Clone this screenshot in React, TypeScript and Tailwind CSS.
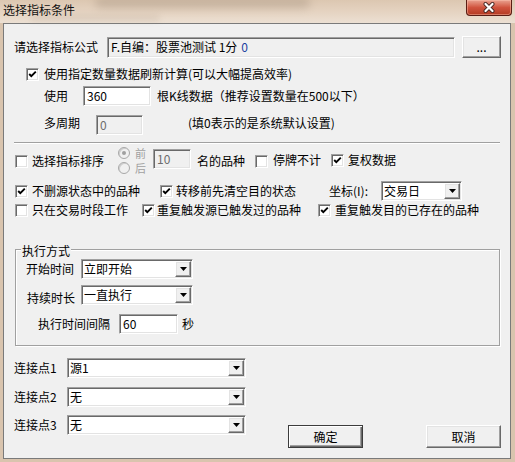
import React from "react";

const sunken =
  "border border-t-[#a0a0a0] border-l-[#a0a0a0] border-r-white border-b-white shadow-[inset_1px_1px_0_#696969,inset_-1px_-1px_0_#e3e3e3]";
const raised =
  "border border-t-white border-l-white border-r-[#696969] border-b-[#696969] shadow-[inset_-1px_-1px_0_#a0a0a0,inset_1px_1px_0_#e3e3e3] bg-[#f0f0f0]";

function Check({ checked, className = "" }: { checked?: boolean; className?: string }) {
  return (
    <span className={`relative inline-block w-[13px] h-[13px] shrink-0 bg-white ${sunken} ${className}`}>
      {checked && (
        <svg className="absolute left-0 top-0" width="11" height="11" viewBox="0 0 11 11">
          <path d="M2.2 5 L4.3 7.2 L8.8 2.6" fill="none" stroke="#000" strokeWidth="1.9" />
        </svg>
      )}
    </span>
  );
}

function Radio({ checked }: { checked?: boolean }) {
  return (
    <span className="relative inline-flex items-center justify-center w-[12px] h-[12px] shrink-0 rounded-full border border-[#a8a8a8] bg-[#f0f0f0] shadow-[inset_1px_1px_0_#cfcfcf]">
      {checked && <span className="w-[4px] h-[4px] rounded-full bg-[#a0a0a0]" />}
    </span>
  );
}

function Edit({ value, disabled, className = "" }: { value: string; disabled?: boolean; className?: string }) {
  return (
    <div
      className={`flex items-center pl-[3px] shrink-0 ${sunken} ${
        disabled ? "bg-[#f0f0f0] text-[#6d6d6d]" : "bg-white text-black"
      } ${className}`}
    >
      <span className="leading-[14px]">{value}</span>
    </div>
  );
}

function Arrow() {
  return (
    <span className={`flex items-center justify-center w-[16px] h-[16px] mr-[1px] shrink-0 ${raised}`}>
      <svg width="7" height="4" viewBox="0 0 7 4">
        <path d="M0 0 H7 L3.5 4 Z" fill="#000" />
      </svg>
    </span>
  );
}

function Select({ value, className = "" }: { value: string; className?: string }) {
  return (
    <div className={`flex items-center bg-white shrink-0 ${sunken} ${className}`}>
      <span className="flex-1 pl-[2px] leading-[14px]">{value}</span>
      <Arrow />
    </div>
  );
}

export default function App() {
  return (
    <div className="w-[515px] h-[462px] overflow-hidden bg-[#d9c4ae] font-['Noto_Sans_CJK_SC','Noto_Sans',sans-serif] text-[12px] leading-[14px] text-black flex flex-col">
      {/* title bar */}
      <div className="relative h-[23px] shrink-0 flex items-start bg-linear-to-b from-[#dcc7b1] via-[#e5d3c1] to-[#ece0d3]">
        <div className="absolute left-[95px] top-[-3px] w-[215px] h-[11px] rounded-full bg-[#8c7a68] opacity-30 blur-[4px]" />
        <div className="absolute left-[30px] top-[15px] w-[130px] h-[6px] rounded-full bg-[#a08c78] opacity-20 blur-[3px]" />
        <span className="relative pl-[3px] pt-[3px] text-[12px] leading-[14px] text-[#111]">选择指标条件</span>
        <div className="relative ml-auto mr-[3px] w-[46px] h-[16px] rounded-b-[4px] border border-t-0 border-[#5a1d14] bg-linear-to-b from-[#e9a190] via-[#d0533e] to-[#b33a22] flex items-center justify-center shadow-[inset_0_0_0_1px_rgba(255,200,180,0.45)]">
          <svg width="14" height="11" viewBox="0 0 14 11">
            <path d="M3.5 2 L10.5 9 M10.5 2 L3.5 9" stroke="#4a2a26" strokeWidth="4" strokeLinecap="round" />
            <path d="M3.5 2 L10.5 9 M10.5 2 L3.5 9" stroke="#fff" strokeWidth="2.2" strokeLinecap="round" />
          </svg>
        </div>
      </div>

      {/* client area */}
      <div className="ml-[3px] w-[508px] h-[436px] shrink-0 border border-[#7a7a7a] bg-[#f0f0f0] pl-[10px] flex flex-col">
        {/* formula row */}
        <div className="mt-[12px] h-[22px] flex items-center">
          <span>请选择指标公式</span>
          <div className={`ml-[9px] w-[348px] h-[21px] flex items-center pl-[3px] bg-[#f0f0f0] ${sunken}`}>
            <span>F.自编：股票池测试 1分 </span>
            <span className="ml-[4px] text-[#1a3fa0]">0</span>
          </div>
          <button className={`ml-[7px] w-[39px] h-[22px] flex items-center justify-center leading-[14px] ${raised}`}>
            ...
          </button>
        </div>

        {/* use count checkbox */}
        <div className="mt-[9px] h-[14px] flex items-center">
          <Check checked className="ml-[12px]" />
          <span className="ml-[5px]">使用指定数量数据刷新计算(可以大幅提高效率)</span>
        </div>

        <div className="mt-[5px] h-[20px] flex items-center">
          <span className="ml-[30px]">使用</span>
          <Edit value="360" className="ml-[15px] w-[68px] h-[20px]" />
          <span className="ml-[6px]">根K线数据（推荐设置数量在500以下）</span>
        </div>

        <div className="mt-[9px] h-[20px] flex items-start">
          <span className="ml-[30px] mt-[1px]">多周期</span>
          <Edit value="0" disabled className="ml-[16px] w-[47px] h-[20px]" />
          <span className="ml-[45px] mt-[1px]">(填0表示的是系统默认设置)</span>
        </div>

        <div className="mt-[7px] w-[486px] h-[2px] border-t border-t-[#a0a0a0] border-b border-b-white" />

        {/* sort row */}
        <div className="mt-[2px] h-[28px] flex items-start">
          <Check className="ml-[1px] mt-[9px]" />
          <span className="ml-[4px] mt-[8px]">选择指标排序</span>
          <div className="ml-[14px] flex flex-col">
            <div className="h-[14px] flex items-center">
              <Radio checked />
              <span className="ml-[5px] text-[11px] leading-[12px] text-[#a0a0a0]">前</span>
            </div>
            <div className="mt-[1px] h-[14px] flex items-center">
              <Radio />
              <span className="ml-[5px] text-[11px] leading-[12px] text-[#a0a0a0]">后</span>
            </div>
          </div>
          <Edit value="10" disabled className="ml-[7px] mt-[3px] w-[38px] h-[20px]" />
          <span className="ml-[6px] mt-[8px]">名的品种</span>
          <Check className="ml-[10px] mt-[9px]" />
          <span className="ml-[5px] mt-[7px]">停牌不计</span>
          <Check checked className="ml-[10px] mt-[8px]" />
          <span className="ml-[4px] mt-[7px]">复权数据</span>
        </div>

        <div className="mt-[7px] h-[20px] flex items-center">
          <Check checked className="ml-[1px]" />
          <span className="ml-[4px]">不删源状态中的品种</span>
          <Check checked className="ml-[20px]" />
          <span className="ml-[3px]">转移前先清空目的状态</span>
          <span className="ml-[33px] w-[52px]">坐标(I):</span>
          <Select value="交易日" className="w-[81px] h-[20px]" />
        </div>

        <div className="mt-[2px] h-[14px] flex items-center">
          <Check className="ml-[1px]" />
          <span className="ml-[4px]">只在交易时段工作</span>
          <Check checked className="ml-[14px]" />
          <span className="ml-[2px]">重复触发源已触发过的品种</span>
          <Check checked className="ml-[17px]" />
          <span className="ml-[4px]">重复触发目的已存在的品种</span>
        </div>

        {/* group box */}
        <div className="relative mt-[32px] ml-[1px] w-[485px] h-[97px] shrink-0 border border-[#a0a0a0] shadow-[inset_1px_1px_0_#fff,1px_1px_0_#fff] pl-[10px] flex flex-col">
          <span className="absolute left-[5px] top-[-6px] px-[1px] bg-[#f0f0f0]">执行方式</span>
          <div className="mt-[9px] h-[20px] flex items-center">
            <span>开始时间</span>
            <Select value="立即开始" className="ml-[7px] w-[112px] h-[20px]" />
          </div>
          <div className="mt-[6px] h-[20px] flex items-start">
            <span className="ml-[1px] mt-[6px]">持续时长</span>
            <Select value="一直执行" className="ml-[6px] w-[112px] h-[20px]" />
          </div>
          <div className="mt-[9px] h-[20px] flex items-center">
            <span className="ml-[12px]">执行时间间隔</span>
            <Edit value="60" className="ml-[9px] w-[59px] h-[20px]" />
            <span className="ml-[4px]">秒</span>
          </div>
        </div>

        {/* connection points + buttons */}
        <div className="mt-[12px] flex items-start">
          <div className="flex flex-col">
            <div className="h-[20px] flex items-center">
              <span className="w-[53px]">连接点1</span>
              <Select value="源1" className="w-[179px] h-[20px]" />
            </div>
            <div className="mt-[9px] h-[20px] flex items-center">
              <span className="w-[53px]">连接点2</span>
              <Select value="无" className="w-[179px] h-[20px]" />
            </div>
            <div className="mt-[8px] h-[20px] flex items-center">
              <span className="w-[53px]">连接点3</span>
              <Select value="无" className="w-[179px] h-[20px]" />
            </div>
          </div>
          <button className="ml-[42px] mt-[67px] w-[75px] h-[23px] flex items-center justify-center border border-[#3c3c3c] bg-[#f0f0f0] shadow-[inset_1px_1px_0_#fff,inset_-1px_-1px_0_#696969,inset_-2px_-2px_0_#a0a0a0]">
            确定
          </button>
          <button className={`ml-[63px] mt-[67px] w-[75px] h-[23px] flex items-center justify-center ${raised}`}>
            取消
          </button>
        </div>
      </div>
    </div>
  );
}
